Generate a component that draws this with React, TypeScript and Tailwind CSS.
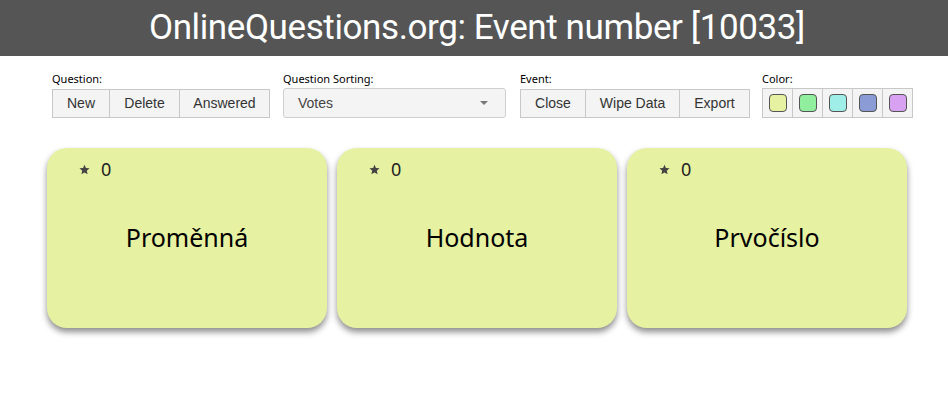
import React from 'react';

const swatches = ['bg-[#e6f1a1]', 'bg-[#92ee9f]', 'bg-[#a0eee8]', 'bg-[#8a9bd6]', 'bg-[#d9a1f2]'];
const cards = ['Proměnná', 'Hodnota', 'Prvočíslo'];

const ButtonGroup: React.FC<{ label: string; items: { text: string; w: string }[] }> = ({ label, items }) => (
  <div className="flex flex-col">
    <span className="text-[11px] leading-[14px] text-black mb-[3px]">{label}</span>
    <div className="flex">
      {items.map((it, i) => (
        <button
          key={it.text}
          className={`${it.w} h-[29px] bg-[#f4f4f4] border border-[#c8c8c8] ${i > 0 ? '-ml-px' : ''} text-[14px] text-[#333] font-['Liberation_Sans',sans-serif]`}
        >
          {it.text}
        </button>
      ))}
    </div>
  </div>
);

export default function App() {
  return (
    <div className="w-[948px] h-[403px] bg-white font-['Noto_Sans',sans-serif]">
      {/* Header */}
      <header className="h-[56px] bg-[#555555] flex items-center justify-center">
        <h1 className="text-white text-[35px] leading-[40px] font-['Roboto',sans-serif] tracking-[-0.4px] ml-[6px]">
          OnlineQuestions.org: Event number [10033]
        </h1>
      </header>

      {/* Toolbar */}
      <div className="flex items-start pl-[52px] pt-[16px]">
        <ButtonGroup
          label="Question:"
          items={[
            { text: 'New', w: 'w-[58px]' },
            { text: 'Delete', w: 'w-[71px]' },
            { text: 'Answered', w: 'w-[91px]' },
          ]}
        />

        <div className="flex flex-col ml-[13px]">
          <span className="text-[11px] leading-[14px] text-black mb-[3px]">Question Sorting:</span>
          <div className="w-[223px] h-[30px] -mt-px bg-[#f4f4f4] border border-[#cfcfcf] rounded-[3px] flex items-center justify-between pl-[14px] pr-[17px]">
            <span className="text-[14px] text-[#444] font-['Liberation_Sans',sans-serif]">Votes</span>
            <span className="w-0 h-0 border-l-[4px] border-r-[4px] border-t-[4px] border-l-transparent border-r-transparent border-t-[#777]" />
          </div>
        </div>

        <div className="ml-[14px]">
          <ButtonGroup
            label="Event:"
            items={[
              { text: 'Close', w: 'w-[66px]' },
              { text: 'Wipe Data', w: 'w-[95px]' },
              { text: 'Export', w: 'w-[71px]' },
            ]}
          />
        </div>

        <div className="flex flex-col ml-[12px]">
          <span className="text-[11px] leading-[14px] text-black mb-[3px]">Color:</span>
          <div className="flex">
            {swatches.map((c, i) => (
              <div
                key={c}
                className={`w-[31px] h-[30px] -mt-px bg-[#f4f4f4] border border-[#c8c8c8] ${i > 0 ? '-ml-px' : ''} flex items-center justify-center`}
              >
                <div className={`w-[18px] h-[18px] rounded-[4px] border border-[#555] ${c}`} />
              </div>
            ))}
          </div>
        </div>
      </div>

      {/* Cards */}
      <div className="flex gap-[10px] pl-[47px] pt-[30px]">
        {cards.map((t) => (
          <div
            key={t}
            className="w-[280px] h-[180px] bg-[#e6f1a1] rounded-[20px] shadow-[0_4px_6px_rgba(0,0,0,0.45)] flex flex-col"
          >
            <div className="flex items-center pl-[32px] pt-[10px] h-[32px]">
              <svg width="11" height="11" viewBox="0 0 24 24" className="fill-[#444]">
                <path d="M12 1.5l3.1 7.3 7.9.7-6 5.2 1.8 7.8L12 18.4l-6.8 4.1L7 14.7 1 9.5l7.9-.7z" />
              </svg>
              <span className="ml-[11px] text-[18px] text-[#222]">0</span>
            </div>
            <div className="flex-1 flex items-center justify-center pb-[32px]">
              <span className="text-[25px] text-black">{t}</span>
            </div>
          </div>
        ))}
      </div>
    </div>
  );
}
